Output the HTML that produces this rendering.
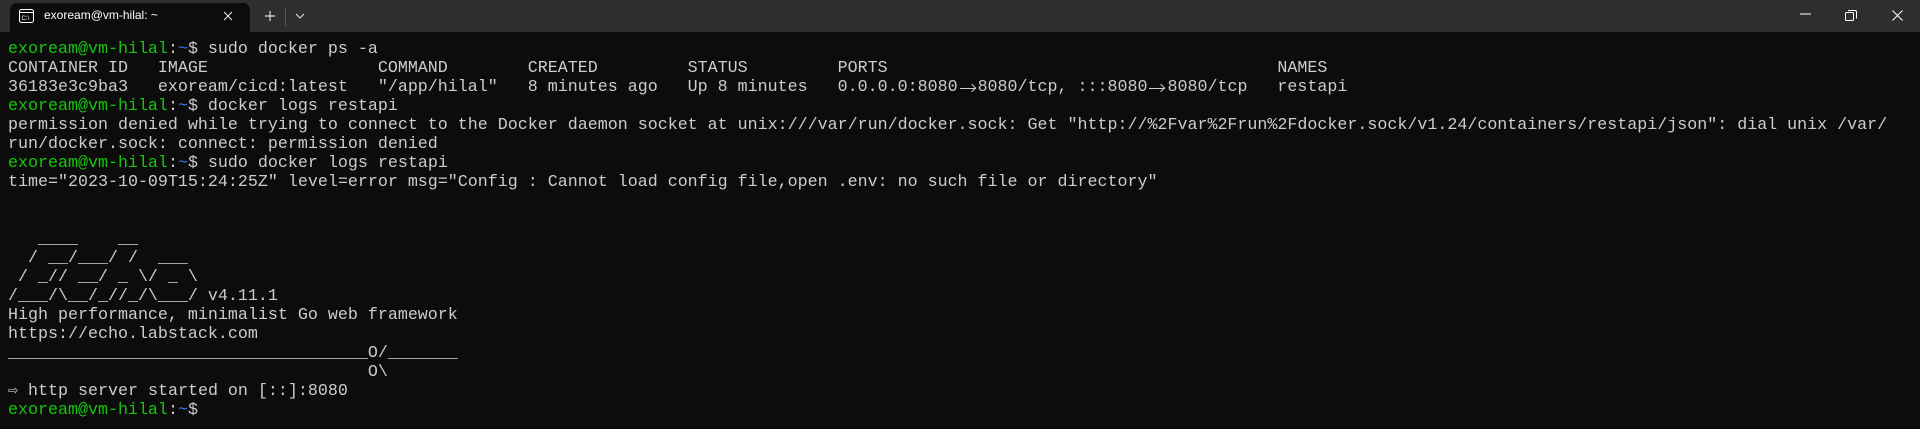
<!DOCTYPE html>
<html><head><meta charset="utf-8"><style>
html,body{margin:0;padding:0;width:1920px;height:429px;overflow:hidden;background:#0c0c0c;}
.bar{position:absolute;left:0;top:0;width:1920px;height:32px;background:#2e2e2e;}
.tab{position:absolute;left:10px;top:3px;width:240px;height:29px;background:#0c0c0c;border-radius:7px 7px 0 0;}
.title{position:absolute;left:44px;top:8px;font:12px "Liberation Sans",sans-serif;color:#fff;}
.term{position:absolute;left:8px;top:40px;margin:0;font:16.67px/19px "Liberation Mono","DejaVu Sans Mono",monospace;color:#cccccc;white-space:pre;}
.g{color:#16c60c}.b{color:#3b78ff}
.a{display:inline-block;width:20px;height:19px;vertical-align:top;position:relative;color:transparent;}
.a::after{content:"";position:absolute;left:2px;right:2px;top:10px;height:1.3px;background:#ccc;}
.a::before{content:"";position:absolute;right:2px;top:7px;width:5px;height:5px;border-top:1.3px solid #ccc;border-right:1.3px solid #ccc;transform:rotate(45deg);transform-origin:center;right:3px;}
svg{position:absolute;}
</style></head><body>
<div class="bar"></div>
<div class="tab"></div>
<svg style="left:19px;top:9px" width="15" height="14" viewBox="0 0 15 14"><rect x="0.5" y="0.5" width="14" height="13" rx="2" fill="none" stroke="#fff"/><line x1="0.5" y1="3.5" x2="14.5" y2="3.5" stroke="#fff"/><text x="2.5" y="11" font-size="6" fill="#fff" font-family="Liberation Sans">C:\</text></svg>
<div class="title">exoream@vm-hilal: ~</div>
<svg style="left:223px;top:11px" width="10" height="10"><path d="M1 1L9 9M9 1L1 9" stroke="#ddd" stroke-width="1.2"/></svg>
<svg style="left:264px;top:10px" width="12" height="12"><path d="M6 1V11M1 6H11" stroke="#ddd" stroke-width="1.2"/></svg>
<div style="position:absolute;left:285px;top:8px;width:1px;height:18px;background:#555"></div>
<svg style="left:295px;top:13px" width="10" height="6"><path d="M1 1L5 5L9 1" stroke="#ddd" fill="none" stroke-width="1.1"/></svg>
<svg style="left:1800px;top:13px" width="11" height="2"><path d="M0 1H11" stroke="#fff"/></svg>
<svg style="left:1845px;top:10px" width="12" height="12"><rect x="0.5" y="2.5" width="8" height="8" rx="1" fill="none" stroke="#fff"/><path d="M3 0.5H10A1.5 1.5 0 0 1 11.5 2V8.5" fill="none" stroke="#fff"/></svg>
<svg style="left:1892px;top:10px" width="11" height="11"><path d="M0.5 0.5L10.5 10.5M10.5 0.5L0.5 10.5" stroke="#fff"/></svg>
<pre class="term"><span class="g">exoream@vm-hilal</span>:<span class="b">~</span>$ sudo docker ps -a
CONTAINER ID   IMAGE                 COMMAND        CREATED         STATUS         PORTS                                       NAMES
36183e3c9ba3   exoream/cicd:latest   "/app/hilal"   8 minutes ago   Up 8 minutes   0.0.0.0:8080<span class="a">→</span>8080/tcp, :::8080<span class="a">→</span>8080/tcp   restapi
<span class="g">exoream@vm-hilal</span>:<span class="b">~</span>$ docker logs restapi
permission denied while trying to connect to the Docker daemon socket at unix:///var/run/docker.sock: Get "http://%2Fvar%2Frun%2Fdocker.sock/v1.24/containers/restapi/json": dial unix /var/
run/docker.sock: connect: permission denied
<span class="g">exoream@vm-hilal</span>:<span class="b">~</span>$ sudo docker logs restapi
time="2023-10-09T15:24:25Z" level=error msg="Config : Cannot load config file,open .env: no such file or directory"


   ____    __
  / __/___/ /  ___
 / _// __/ _ \/ _ \
/___/\__/_//_/\___/ v4.11.1
High performance, minimalist Go web framework
https://echo.labstack.com
____________________________________O/_______
                                    O\
⇨ http server started on [::]:8080
<span class="g">exoream@vm-hilal</span>:<span class="b">~</span>$</pre>
</body></html>
